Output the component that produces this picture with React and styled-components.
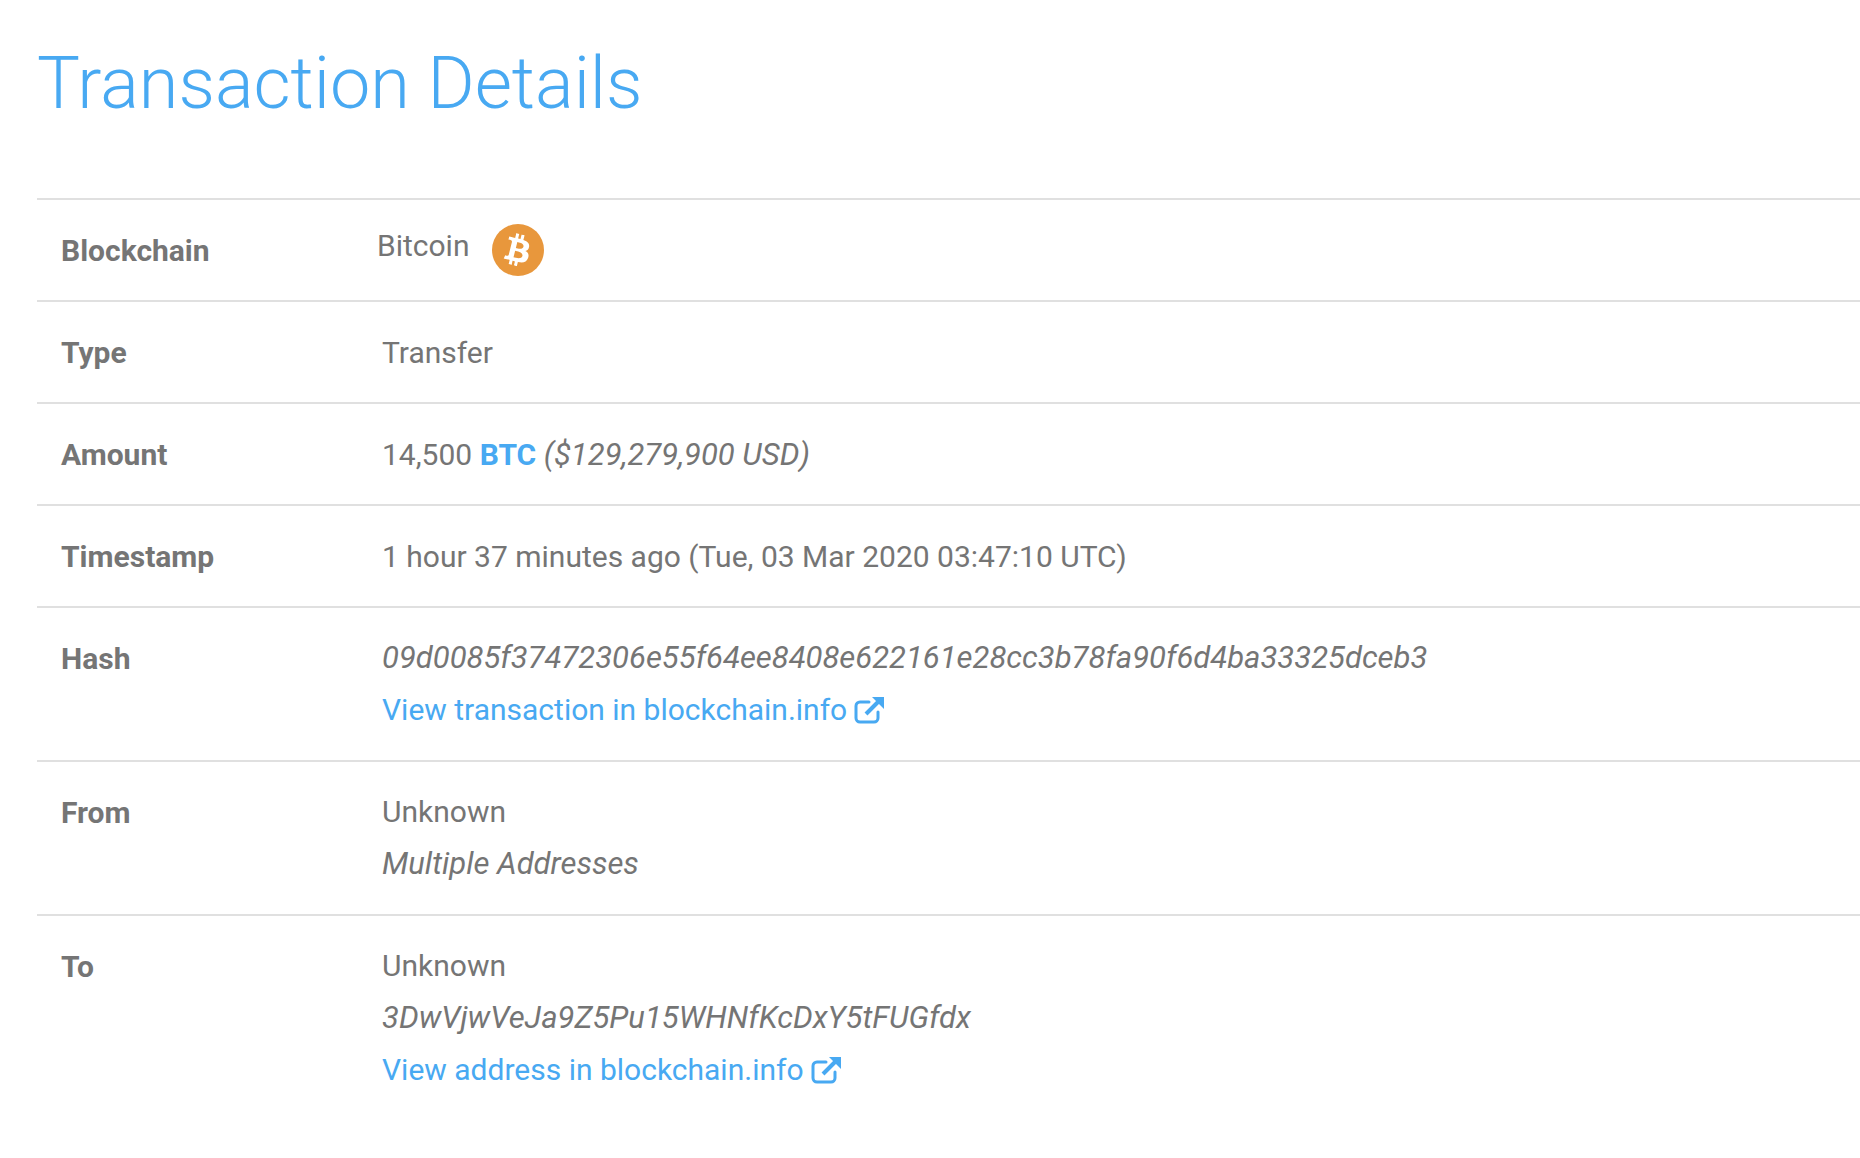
import React from "react";
import styled, { createGlobalStyle } from "styled-components";
import { FaBtc } from "react-icons/fa";

const GlobalStyle = createGlobalStyle`
  html, body {
    margin: 0;
    background: #fff;
    overflow: hidden;
  }
  body {
    font-family: Roboto, "Liberation Sans", sans-serif;
    color: #757575;
  }
`;

const Page = styled.div`
  padding: 0 0 0 37px;
  height: 1158px;
  box-sizing: border-box;
  overflow: hidden;
`;

const Title = styled.h1`
  margin: 0 0 68px;
  padding: 38px 0 0;
  font-size: 72px;
  line-height: 92px;
  font-weight: 300;
  color: #48a9f2;
`;

const Row = styled.div`
  display: grid;
  grid-template-columns: 345px 1fr;
  border-top: 2px solid #e0e0e0;
  padding: 24px 0;
  font-size: 30px;
  line-height: 52px;
`;

const Label = styled.div`
  padding-left: 24px;
  font-weight: 700;
  padding-top: 1px;
  margin-bottom: -1px;
`;

const Lines = styled.div`
  display: flex;
  flex-direction: column;
  min-width: 0;
  white-space: nowrap;
`;

const SingleLine = styled.div`
  padding-top: 1px;
  margin-bottom: -1px;
`;

const ChainName = styled.div`
  display: flex;
  align-items: center;
  gap: 23px;
  margin-left: -5px;
`;

const ChainText = styled.span`
  margin-top: -8px;
`;

const CoinBadge = styled.span`
  width: 52px;
  height: 52px;
  border-radius: 50%;
  background: #e8973c;
  color: #fff;
  display: inline-flex;
  align-items: center;
  justify-content: center;
  font-size: 32px;
  svg {
    transform: rotate(14deg);
  }
`;

const Note = styled.em`
  font-style: italic;
  font-size: 31px;
`;

const Coin = styled.strong`
  color: #48a9f2;
  font-weight: 700;
`;

const ExtLink = styled.a`
  display: inline-flex;
  align-items: center;
  gap: 7px;
  color: #48a9f2;
  text-decoration: none;
`;

const ExternalIcon = () => (
  <svg width="31" height="28" viewBox="0 0 31 28" fill="none" stroke="currentColor" strokeWidth="3">
    <path d="M24 16v6a4 4 0 0 1-4 4H6a4 4 0 0 1-4-4V10a4 4 0 0 1 4-4h9" strokeLinecap="round" />
    <path d="M12 18 27 3" strokeWidth="4" />
    <path d="M18 1h12v12z" fill="currentColor" stroke="none" />
  </svg>
);

const rows = [
  {
    label: "Type",
    lines: [<SingleLine key="a">Transfer</SingleLine>],
  },
  {
    label: "Amount",
    lines: [
      <SingleLine key="a">
        14,500 <Coin>BTC</Coin> <Note>($129,279,900 USD)</Note>
      </SingleLine>,
    ],
  },
  {
    label: "Timestamp",
    lines: [<SingleLine key="a">1 hour 37 minutes ago (Tue, 03 Mar 2020 03:47:10 UTC)</SingleLine>],
  },
  {
    label: "Hash",
    lines: [
      <Note key="a">09d0085f37472306e55f64ee8408e622161e28cc3b78fa90f6d4ba33325dceb3</Note>,
      <div key="b">
        <ExtLink href="#">
          View transaction in blockchain.info <ExternalIcon />
        </ExtLink>
      </div>,
    ],
  },
  {
    label: "From",
    lines: [<div key="a">Unknown</div>, <Note key="b">Multiple Addresses</Note>],
  },
  {
    label: "To",
    lines: [
      <div key="a">Unknown</div>,
      <Note key="b">3DwVjwVeJa9Z5Pu15WHNfKcDxY5tFUGfdx</Note>,
      <div key="c">
        <ExtLink href="#">
          View address in blockchain.info <ExternalIcon />
        </ExtLink>
      </div>,
    ],
  },
];

export default function App() {
  return (
    <Page>
      <GlobalStyle />
      <Title>Transaction Details</Title>
      <div>
        <Row>
          <Label>Blockchain</Label>
          <Lines>
            <ChainName>
              <ChainText>Bitcoin</ChainText>
              <CoinBadge>
                <FaBtc />
              </CoinBadge>
            </ChainName>
          </Lines>
        </Row>
        {rows.map((row) => (
          <Row key={row.label}>
            <Label>{row.label}</Label>
            <Lines>{row.lines}</Lines>
          </Row>
        ))}
      </div>
    </Page>
  );
}
